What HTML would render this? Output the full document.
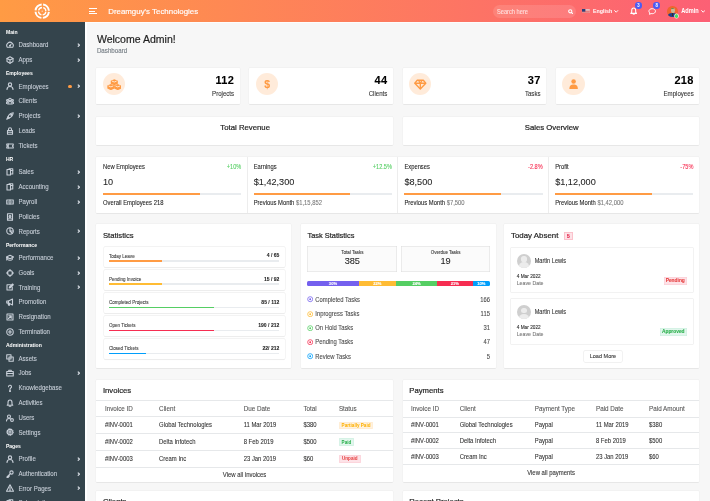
<!DOCTYPE html><html><head><meta charset="utf-8"><style>
html,body{margin:0;padding:0;width:710px;height:501px;overflow:hidden;background:#f7f7f7;font-family:"Liberation Sans", sans-serif;}
#r{position:relative;width:710px;height:501px;overflow:hidden;will-change:transform;} #r div{-webkit-text-stroke:0.08px currentColor;}
</style></head><body><div id="r">
<div style="position:absolute;left:0.00px;top:0.00px;width:710.00px;height:22.20px;background:linear-gradient(to right,#ff9b44 0%,#fc6075 100%);"></div>
<div style="position:absolute;left:87.00px;top:22.20px;width:623.00px;height:1.00px;background:#fdfdfd;"></div>
<svg style="position:absolute;left:34.20px;top:2.90px;" width="16.40" height="16.40" viewBox="0 0 40 40"><circle cx="20" cy="20" r="16.4" fill="none" stroke="#fff" stroke-width="4.8" stroke-dasharray="22.16 3.6" stroke-dashoffset="23.96"/><circle cx="20" cy="20" r="9.0" fill="none" stroke="#fff" stroke-width="3.2" stroke-dasharray="11.14 3.0" stroke-dashoffset="12.64"/><circle cx="20" cy="20" r="1.6" fill="#fde0c8"/></svg>
<div style="position:absolute;left:89.00px;top:7.90px;width:8.40px;height:1.00px;background:#fff;"></div>
<div style="position:absolute;left:89.00px;top:10.60px;width:5.50px;height:1.00px;background:#fff;"></div>
<div style="position:absolute;left:89.00px;top:13.20px;width:8.40px;height:1.00px;background:#fff;"></div>
<div style="position:absolute;left:108.20px;top:8.00px;font-size:7.90px;line-height:7.90px;color:#fff;font-weight:400;white-space:nowrap;-webkit-text-stroke:0.15px #fff;">Dreamguy's Technologies</div>
<div style="position:absolute;left:492.70px;top:5.00px;width:83.60px;height:12.70px;background:rgba(255,255,255,0.12);border-radius:7px;"></div>
<div style="position:absolute;left:497.00px;top:10.00px;font-size:5.70px;line-height:5.70px;color:rgba(255,255,255,0.72);font-weight:400;white-space:nowrap;transform:scaleY(1.12);transform-origin:50% 4px;">Search here</div>
<svg style="position:absolute;left:567.60px;top:8.60px;" width="5.60" height="5.60" viewBox="0 0 16 16"><circle cx="6.5" cy="6.5" r="4.6" fill="none" stroke="#fff" stroke-width="3"/><path d="M10 10 L14.5 14.5" stroke="#fff" stroke-width="3.2" stroke-linecap="round"/></svg>
<svg style="position:absolute;left:582.40px;top:8.50px;" width="7.70" height="4.80" viewBox="0 0 16 10"><rect width="16" height="10" fill="#eee"/><rect y="1.5" width="16" height="1.4" fill="#d44"/><rect y="4.3" width="16" height="1.4" fill="#d44"/><rect y="7.1" width="16" height="1.4" fill="#d44"/><rect width="7" height="5.5" fill="#2a3f7a"/></svg>
<div style="position:absolute;left:593.00px;top:9.00px;font-size:5.30px;line-height:5.30px;color:#fff;font-weight:700;white-space:nowrap;transform:scaleY(1.12);transform-origin:50% 4px;-webkit-text-stroke:0;">English</div>
<svg style="position:absolute;left:614.40px;top:9.70px;" width="4.40" height="3.00" viewBox="0 0 10 7"><path d="M1.3 1.3 L5 5.2 L8.7 1.3" fill="none" stroke="#fff" stroke-width="2.2" stroke-linecap="round" stroke-linejoin="round"/></svg>
<svg style="position:absolute;left:629.90px;top:6.60px;" width="7.40" height="8.20" viewBox="0 0 16 18"><path d="M8 2 C4.6 2 3.6 4.8 3.6 8 L3.6 11.8 L1.6 14 L14.4 14 L12.4 11.8 L12.4 8 C12.4 4.8 11.4 2 8 2 Z" fill="none" stroke="#fff" stroke-width="2.3" stroke-linejoin="round"/><path d="M6 16.2 Q8 17.8 10 16.2" fill="none" stroke="#fff" stroke-width="2"/></svg>
<div style="position:absolute;left:635.1px;top:2.4px;width:6.5px;height:6.5px;border-radius:50%;background:#4a5cf5;"></div>
<div style="position:absolute;left:488.35px;width:300px;text-align:center;top:4.00px;font-size:4.30px;line-height:4.30px;color:#fff;font-weight:700;white-space:nowrap;transform:scaleY(1.12);transform-origin:50% 3px;-webkit-text-stroke:0;">3</div>
<svg style="position:absolute;left:647.90px;top:7.90px;" width="8.40" height="7.00" viewBox="0 0 18 16"><path d="M9 1.5 C4.5 1.5 1.5 4.2 1.5 7.3 C1.5 9 2.3 10.3 3.6 11.3 L2.8 14.5 L6.5 12.7 C7.3 12.9 8.1 13 9 13 C13.5 13 16.5 10.4 16.5 7.3 C16.5 4.2 13.5 1.5 9 1.5 Z" fill="none" stroke="#fff" stroke-width="2.2" stroke-linejoin="round"/></svg>
<div style="position:absolute;left:653.4px;top:2.1px;width:6.5px;height:6.5px;border-radius:50%;background:#4a5cf5;"></div>
<div style="position:absolute;left:506.65px;width:300px;text-align:center;top:4.00px;font-size:4.30px;line-height:4.30px;color:#fff;font-weight:700;white-space:nowrap;transform:scaleY(1.12);transform-origin:50% 3px;-webkit-text-stroke:0;">8</div>
<div style="position:absolute;left:667.4px;top:6.3px;width:10.4px;height:10.4px;border-radius:50%;overflow:hidden;background:#f0642e;"><div style="position:absolute;left:3.2px;top:2.2px;width:4px;height:5px;border-radius:45%;background:#c9b59a;"></div><div style="position:absolute;left:3.6px;top:1.4px;width:3.2px;height:1.6px;border-radius:40%;background:#6f8a4a;"></div><div style="position:absolute;left:0.6px;top:6.8px;width:9.2px;height:6px;border-radius:45% 45% 0 0;background:#1d3f8a;"></div><div style="position:absolute;left:4.3px;top:6.6px;width:1.8px;height:3.5px;background:#3a2a2a;"></div></div>
<div style="position:absolute;left:674.6px;top:14.2px;width:3.4px;height:3.4px;border-radius:50%;background:#4cd964;box-shadow:0 0 0 0.6px #fff;"></div>
<div style="position:absolute;left:681.30px;top:9.00px;font-size:5.60px;line-height:5.60px;color:#fff;font-weight:700;white-space:nowrap;transform:scaleY(1.12);transform-origin:50% 4px;-webkit-text-stroke:0;">Admin</div>
<svg style="position:absolute;left:700.80px;top:9.70px;" width="4.40" height="3.00" viewBox="0 0 10 7"><path d="M1.3 1.3 L5 5.2 L8.7 1.3" fill="none" stroke="#fff" stroke-width="2.2" stroke-linecap="round" stroke-linejoin="round"/></svg>
<div style="position:absolute;left:0.00px;top:22.20px;width:85.30px;height:478.80px;background:#34444c;"></div>
<div style="position:absolute;left:85.30px;top:22.20px;width:1.70px;height:478.80px;background:#ffffff;"></div>
<div style="position:absolute;left:5.90px;top:30.00px;font-size:5.10px;line-height:5.10px;color:#ffffff;font-weight:700;white-space:nowrap;transform:scaleY(1.12);transform-origin:50% 4px;-webkit-text-stroke:0;">Main</div>
<div style="position:absolute;left:18.50px;top:42.00px;font-size:6.10px;line-height:6.10px;color:#c8cfd8;font-weight:400;white-space:nowrap;transform:scaleY(1.12);transform-origin:50% 5px;">Dashboard</div>
<svg style="position:absolute;left:6.00px;top:41.15px" width="8.0" height="8.0" viewBox="0 0 16 16"><g fill="none" stroke="#c8cfd8" stroke-width="2.2" stroke-linejoin="round" stroke-linecap="round"><path d="M2.5 12.5 A6.5 6.5 0 1 1 13.5 12.5 Z" /><path d="M8 9 L10.5 6" /><circle cx="8" cy="9.5" r="1" /></g></svg>
<svg style="position:absolute;left:76.90px;top:43.05px;" width="3.20" height="4.30" viewBox="0 0 6 8"><path d="M1.5 1.2 L4.6 4 L1.5 6.8" fill="none" stroke="#d5dbe2" stroke-width="2.3"/></svg>
<div style="position:absolute;left:18.50px;top:57.00px;font-size:6.10px;line-height:6.10px;color:#c8cfd8;font-weight:400;white-space:nowrap;transform:scaleY(1.12);transform-origin:50% 5px;">Apps</div>
<svg style="position:absolute;left:6.00px;top:55.95px" width="8.0" height="8.0" viewBox="0 0 16 16"><g fill="none" stroke="#c8cfd8" stroke-width="2.2" stroke-linejoin="round" stroke-linecap="round"><path d="M8 1.5 L14 4.8 L14 11.2 L8 14.5 L2 11.2 L2 4.8 Z"/><path d="M2 4.8 L8 8 L14 4.8 M8 8 L8 14.5"/></g></svg>
<svg style="position:absolute;left:76.90px;top:57.85px;" width="3.20" height="4.30" viewBox="0 0 6 8"><path d="M1.5 1.2 L4.6 4 L1.5 6.8" fill="none" stroke="#d5dbe2" stroke-width="2.3"/></svg>
<div style="position:absolute;left:5.90px;top:71.00px;font-size:5.10px;line-height:5.10px;color:#ffffff;font-weight:700;white-space:nowrap;transform:scaleY(1.12);transform-origin:50% 4px;-webkit-text-stroke:0;">Employees</div>
<div style="position:absolute;left:18.50px;top:84.00px;font-size:6.10px;line-height:6.10px;color:#c8cfd8;font-weight:400;white-space:nowrap;transform:scaleY(1.12);transform-origin:50% 5px;">Employees</div>
<svg style="position:absolute;left:6.00px;top:82.45px" width="8.0" height="8.0" viewBox="0 0 16 16"><g fill="none" stroke="#c8cfd8" stroke-width="2.2" stroke-linejoin="round" stroke-linecap="round"><circle cx="8" cy="5" r="3.3"/><path d="M2 15 C2 10.5 4.5 9 8 9 C11.5 9 14 10.5 14 15"/></g></svg>
<svg style="position:absolute;left:76.90px;top:84.35px;" width="3.20" height="4.30" viewBox="0 0 6 8"><path d="M1.5 1.2 L4.6 4 L1.5 6.8" fill="none" stroke="#d5dbe2" stroke-width="2.3"/></svg>
<div style="position:absolute;left:68.30px;top:84.65px;width:3.4px;height:3.4px;border-radius:50%;background:#ff9b44"></div>
<div style="position:absolute;left:18.50px;top:98.00px;font-size:6.10px;line-height:6.10px;color:#c8cfd8;font-weight:400;white-space:nowrap;transform:scaleY(1.12);transform-origin:50% 5px;">Clients</div>
<svg style="position:absolute;left:6.00px;top:97.25px" width="8.0" height="8.0" viewBox="0 0 16 16"><g fill="none" stroke="#c8cfd8" stroke-width="2.2" stroke-linejoin="round" stroke-linecap="round"><circle cx="8" cy="5" r="2.6"/><path d="M3.5 14 C3.5 10.5 5.5 9 8 9 C10.5 9 12.5 10.5 12.5 14 Z"/><circle cx="3" cy="7" r="1.8"/><circle cx="13" cy="7" r="1.8"/><path d="M0.8 13 C0.8 11 1.5 10 3 10 M15.2 13 C15.2 11 14.5 10 13 10"/></g></svg>
<div style="position:absolute;left:18.50px;top:113.00px;font-size:6.10px;line-height:6.10px;color:#c8cfd8;font-weight:400;white-space:nowrap;transform:scaleY(1.12);transform-origin:50% 5px;">Projects</div>
<svg style="position:absolute;left:6.00px;top:112.05px" width="8.0" height="8.0" viewBox="0 0 16 16"><g fill="none" stroke="#c8cfd8" stroke-width="2.2" stroke-linejoin="round" stroke-linecap="round"><path d="M14.5 1.5 C10 2 6 5 4 9.5 L6.5 12 C11 10 14 6 14.5 1.5 Z"/><path d="M4 9.5 L1.5 14.5 L6.5 12"/><circle cx="10.5" cy="5.5" r="1.2"/></g></svg>
<svg style="position:absolute;left:76.90px;top:113.95px;" width="3.20" height="4.30" viewBox="0 0 6 8"><path d="M1.5 1.2 L4.6 4 L1.5 6.8" fill="none" stroke="#d5dbe2" stroke-width="2.3"/></svg>
<div style="position:absolute;left:18.50px;top:128.00px;font-size:6.10px;line-height:6.10px;color:#c8cfd8;font-weight:400;white-space:nowrap;transform:scaleY(1.12);transform-origin:50% 5px;">Leads</div>
<svg style="position:absolute;left:6.00px;top:126.85px" width="8.0" height="8.0" viewBox="0 0 16 16"><g fill="none" stroke="#c8cfd8" stroke-width="2.2" stroke-linejoin="round" stroke-linecap="round"><path d="M3 7 L13 7 L13 14.5 L3 14.5 Z"/><path d="M5 7 L5 4.5 A3 3 0 0 1 11 4.5 L11 7"/><path d="M3 10.5 L13 10.5"/></g></svg>
<div style="position:absolute;left:18.50px;top:143.00px;font-size:6.10px;line-height:6.10px;color:#c8cfd8;font-weight:400;white-space:nowrap;transform:scaleY(1.12);transform-origin:50% 5px;">Tickets</div>
<svg style="position:absolute;left:6.00px;top:141.65px" width="8.0" height="8.0" viewBox="0 0 16 16"><g fill="none" stroke="#c8cfd8" stroke-width="2.2" stroke-linejoin="round" stroke-linecap="round"><path d="M1.5 4 L14.5 4 L14.5 6.5 A1.5 1.5 0 0 0 14.5 9.5 L14.5 12 L1.5 12 L1.5 9.5 A1.5 1.5 0 0 0 1.5 6.5 Z"/><path d="M4.5 4 L4.5 12"/></g></svg>
<div style="position:absolute;left:5.90px;top:157.00px;font-size:5.10px;line-height:5.10px;color:#ffffff;font-weight:700;white-space:nowrap;transform:scaleY(1.12);transform-origin:50% 4px;-webkit-text-stroke:0;">HR</div>
<div style="position:absolute;left:18.50px;top:169.00px;font-size:6.10px;line-height:6.10px;color:#c8cfd8;font-weight:400;white-space:nowrap;transform:scaleY(1.12);transform-origin:50% 5px;">Sales</div>
<svg style="position:absolute;left:6.00px;top:168.15px" width="8.0" height="8.0" viewBox="0 0 16 16"><g fill="none" stroke="#c8cfd8" stroke-width="2.2" stroke-linejoin="round" stroke-linecap="round"><path d="M2 3 L9 3 L9 14 L2 14 Z"/><path d="M6 1.5 L13.5 1.5 L13.5 12 L9 12"/><path d="M9 5 L13.5 5"/></g></svg>
<svg style="position:absolute;left:76.90px;top:170.05px;" width="3.20" height="4.30" viewBox="0 0 6 8"><path d="M1.5 1.2 L4.6 4 L1.5 6.8" fill="none" stroke="#d5dbe2" stroke-width="2.3"/></svg>
<div style="position:absolute;left:18.50px;top:184.00px;font-size:6.10px;line-height:6.10px;color:#c8cfd8;font-weight:400;white-space:nowrap;transform:scaleY(1.12);transform-origin:50% 5px;">Accounting</div>
<svg style="position:absolute;left:6.00px;top:182.95px" width="8.0" height="8.0" viewBox="0 0 16 16"><g fill="none" stroke="#c8cfd8" stroke-width="2.2" stroke-linejoin="round" stroke-linecap="round"><path d="M2 3 L9 3 L9 14 L2 14 Z"/><path d="M6 1.5 L13.5 1.5 L13.5 12 L9 12"/><path d="M9 5 L13.5 5"/></g></svg>
<svg style="position:absolute;left:76.90px;top:184.85px;" width="3.20" height="4.30" viewBox="0 0 6 8"><path d="M1.5 1.2 L4.6 4 L1.5 6.8" fill="none" stroke="#d5dbe2" stroke-width="2.3"/></svg>
<div style="position:absolute;left:18.50px;top:199.00px;font-size:6.10px;line-height:6.10px;color:#c8cfd8;font-weight:400;white-space:nowrap;transform:scaleY(1.12);transform-origin:50% 5px;">Payroll</div>
<svg style="position:absolute;left:6.00px;top:197.75px" width="8.0" height="8.0" viewBox="0 0 16 16"><g fill="none" stroke="#c8cfd8" stroke-width="2.2" stroke-linejoin="round" stroke-linecap="round"><path d="M1.5 4 L14.5 4 L14.5 12 L1.5 12 Z"/><path d="M8 4 L8 12"/><path d="M4 8 L6 8 M10 8 L12 8"/></g></svg>
<svg style="position:absolute;left:76.90px;top:199.65px;" width="3.20" height="4.30" viewBox="0 0 6 8"><path d="M1.5 1.2 L4.6 4 L1.5 6.8" fill="none" stroke="#d5dbe2" stroke-width="2.3"/></svg>
<div style="position:absolute;left:18.50px;top:214.00px;font-size:6.10px;line-height:6.10px;color:#c8cfd8;font-weight:400;white-space:nowrap;transform:scaleY(1.12);transform-origin:50% 5px;">Policies</div>
<svg style="position:absolute;left:6.00px;top:212.55px" width="8.0" height="8.0" viewBox="0 0 16 16"><g fill="none" stroke="#c8cfd8" stroke-width="2.2" stroke-linejoin="round" stroke-linecap="round"><path d="M3 1.5 L13 1.5 L13 14.5 L3 14.5 Z"/><circle cx="8" cy="7" r="1.8"/><path d="M5.5 12 C5.5 10 6.5 9.5 8 9.5 C9.5 9.5 10.5 10 10.5 12"/></g></svg>
<div style="position:absolute;left:18.50px;top:229.00px;font-size:6.10px;line-height:6.10px;color:#c8cfd8;font-weight:400;white-space:nowrap;transform:scaleY(1.12);transform-origin:50% 5px;">Reports</div>
<svg style="position:absolute;left:6.00px;top:227.35px" width="8.0" height="8.0" viewBox="0 0 16 16"><g fill="none" stroke="#c8cfd8" stroke-width="2.2" stroke-linejoin="round" stroke-linecap="round"><circle cx="8" cy="8" r="6.5"/><path d="M8 1.5 L8 8 L14.5 8"/><path d="M8 8 L12.5 12.5"/></g></svg>
<svg style="position:absolute;left:76.90px;top:229.25px;" width="3.20" height="4.30" viewBox="0 0 6 8"><path d="M1.5 1.2 L4.6 4 L1.5 6.8" fill="none" stroke="#d5dbe2" stroke-width="2.3"/></svg>
<div style="position:absolute;left:5.90px;top:243.00px;font-size:5.10px;line-height:5.10px;color:#ffffff;font-weight:700;white-space:nowrap;transform:scaleY(1.12);transform-origin:50% 4px;-webkit-text-stroke:0;">Performance</div>
<div style="position:absolute;left:18.50px;top:255.00px;font-size:6.10px;line-height:6.10px;color:#c8cfd8;font-weight:400;white-space:nowrap;transform:scaleY(1.12);transform-origin:50% 5px;">Performance</div>
<svg style="position:absolute;left:6.00px;top:253.85px" width="8.0" height="8.0" viewBox="0 0 16 16"><g fill="none" stroke="#c8cfd8" stroke-width="2.2" stroke-linejoin="round" stroke-linecap="round"><path d="M0.8 6 L8 2.5 L15.2 6 L8 9.5 Z"/><path d="M3.5 7.5 L3.5 11 C5 13 11 13 12.5 11 L12.5 7.5"/><path d="M1.5 6.5 L1.5 12"/></g></svg>
<svg style="position:absolute;left:76.90px;top:255.75px;" width="3.20" height="4.30" viewBox="0 0 6 8"><path d="M1.5 1.2 L4.6 4 L1.5 6.8" fill="none" stroke="#d5dbe2" stroke-width="2.3"/></svg>
<div style="position:absolute;left:18.50px;top:270.00px;font-size:6.10px;line-height:6.10px;color:#c8cfd8;font-weight:400;white-space:nowrap;transform:scaleY(1.12);transform-origin:50% 5px;">Goals</div>
<svg style="position:absolute;left:6.00px;top:268.65px" width="8.0" height="8.0" viewBox="0 0 16 16"><g fill="none" stroke="#c8cfd8" stroke-width="2.2" stroke-linejoin="round" stroke-linecap="round"><circle cx="8" cy="8" r="5"/><path d="M8 0.8 L8 4 M8 12 L8 15.2 M0.8 8 L4 8 M12 8 L15.2 8"/></g></svg>
<svg style="position:absolute;left:76.90px;top:270.55px;" width="3.20" height="4.30" viewBox="0 0 6 8"><path d="M1.5 1.2 L4.6 4 L1.5 6.8" fill="none" stroke="#d5dbe2" stroke-width="2.3"/></svg>
<div style="position:absolute;left:18.50px;top:285.00px;font-size:6.10px;line-height:6.10px;color:#c8cfd8;font-weight:400;white-space:nowrap;transform:scaleY(1.12);transform-origin:50% 5px;">Training</div>
<svg style="position:absolute;left:6.00px;top:283.45px" width="8.0" height="8.0" viewBox="0 0 16 16"><g fill="none" stroke="#c8cfd8" stroke-width="2.2" stroke-linejoin="round" stroke-linecap="round"><path d="M2 3.5 L9 3.5 M2 3.5 L2 14 L12.5 14 L12.5 8"/><path d="M6.5 10 L7 8 L13 2 L14.5 3.5 L8.5 9.5 Z"/></g></svg>
<svg style="position:absolute;left:76.90px;top:285.35px;" width="3.20" height="4.30" viewBox="0 0 6 8"><path d="M1.5 1.2 L4.6 4 L1.5 6.8" fill="none" stroke="#d5dbe2" stroke-width="2.3"/></svg>
<div style="position:absolute;left:18.50px;top:299.00px;font-size:6.10px;line-height:6.10px;color:#c8cfd8;font-weight:400;white-space:nowrap;transform:scaleY(1.12);transform-origin:50% 5px;">Promotion</div>
<svg style="position:absolute;left:6.00px;top:298.25px" width="8.0" height="8.0" viewBox="0 0 16 16"><g fill="none" stroke="#c8cfd8" stroke-width="2.2" stroke-linejoin="round" stroke-linecap="round"><path d="M1.5 6 L5 6 L13 2 L13 14 L5 10 L1.5 10 Z"/><path d="M4 10 L5 14.5 L7 14.5 L6.5 10.5"/><path d="M5 6 L5 10"/></g></svg>
<div style="position:absolute;left:18.50px;top:314.00px;font-size:6.10px;line-height:6.10px;color:#c8cfd8;font-weight:400;white-space:nowrap;transform:scaleY(1.12);transform-origin:50% 5px;">Resignation</div>
<svg style="position:absolute;left:6.00px;top:313.05px" width="8.0" height="8.0" viewBox="0 0 16 16"><g fill="none" stroke="#c8cfd8" stroke-width="2.2" stroke-linejoin="round" stroke-linecap="round"><path d="M2 2 L14 2 L14 14 L2 14 Z"/><path d="M5.5 5.5 L10.5 5.5 L10.5 10.5 M10.5 5.5 L5 11"/></g></svg>
<div style="position:absolute;left:18.50px;top:329.00px;font-size:6.10px;line-height:6.10px;color:#c8cfd8;font-weight:400;white-space:nowrap;transform:scaleY(1.12);transform-origin:50% 5px;">Termination</div>
<svg style="position:absolute;left:6.00px;top:327.85px" width="8.0" height="8.0" viewBox="0 0 16 16"><g fill="none" stroke="#c8cfd8" stroke-width="2.2" stroke-linejoin="round" stroke-linecap="round"><circle cx="8" cy="8" r="6.5"/><circle cx="8" cy="8" r="2.2"/></g></svg>
<div style="position:absolute;left:5.90px;top:343.00px;font-size:5.10px;line-height:5.10px;color:#ffffff;font-weight:700;white-space:nowrap;transform:scaleY(1.12);transform-origin:50% 4px;-webkit-text-stroke:0;">Administration</div>
<div style="position:absolute;left:18.50px;top:356.00px;font-size:6.10px;line-height:6.10px;color:#c8cfd8;font-weight:400;white-space:nowrap;transform:scaleY(1.12);transform-origin:50% 5px;">Assets</div>
<svg style="position:absolute;left:6.00px;top:354.35px" width="8.0" height="8.0" viewBox="0 0 16 16"><g fill="none" stroke="#c8cfd8" stroke-width="2.2" stroke-linejoin="round" stroke-linecap="round"><path d="M1.5 1.5 L10 1.5 L10 10 L1.5 10 Z"/><path d="M6 6 L14.5 6 L14.5 14.5 L6 14.5 Z"/></g></svg>
<div style="position:absolute;left:18.50px;top:370.00px;font-size:6.10px;line-height:6.10px;color:#c8cfd8;font-weight:400;white-space:nowrap;transform:scaleY(1.12);transform-origin:50% 5px;">Jobs</div>
<svg style="position:absolute;left:6.00px;top:369.15px" width="8.0" height="8.0" viewBox="0 0 16 16"><g fill="none" stroke="#c8cfd8" stroke-width="2.2" stroke-linejoin="round" stroke-linecap="round"><path d="M1.5 5 L14.5 5 L14.5 14 L1.5 14 Z"/><path d="M5.5 5 L5.5 2.5 L10.5 2.5 L10.5 5"/><path d="M1.5 9 L14.5 9"/></g></svg>
<svg style="position:absolute;left:76.90px;top:371.05px;" width="3.20" height="4.30" viewBox="0 0 6 8"><path d="M1.5 1.2 L4.6 4 L1.5 6.8" fill="none" stroke="#d5dbe2" stroke-width="2.3"/></svg>
<div style="position:absolute;left:18.50px;top:385.00px;font-size:6.10px;line-height:6.10px;color:#c8cfd8;font-weight:400;white-space:nowrap;transform:scaleY(1.12);transform-origin:50% 5px;">Knowledgebase</div>
<svg style="position:absolute;left:6.00px;top:383.95px" width="8.0" height="8.0" viewBox="0 0 16 16"><g fill="none" stroke="#c8cfd8" stroke-width="2.2" stroke-linejoin="round" stroke-linecap="round"><path d="M5 5.5 A3 3 0 1 1 9.5 8 C8.3 8.8 8 9.5 8 11"/><circle cx="8" cy="14" r="1"/></g></svg>
<div style="position:absolute;left:18.50px;top:400.00px;font-size:6.10px;line-height:6.10px;color:#c8cfd8;font-weight:400;white-space:nowrap;transform:scaleY(1.12);transform-origin:50% 5px;">Activities</div>
<svg style="position:absolute;left:6.00px;top:398.75px" width="8.0" height="8.0" viewBox="0 0 16 16"><g fill="none" stroke="#c8cfd8" stroke-width="2.2" stroke-linejoin="round" stroke-linecap="round"><path d="M8 2 C4.8 2 4 4.5 4 7.5 L4 11 L2.5 12.5 L13.5 12.5 L12 11 L12 7.5 C12 4.5 11.2 2 8 2 Z"/><path d="M6.5 14.5 L9.5 14.5"/></g></svg>
<div style="position:absolute;left:18.50px;top:415.00px;font-size:6.10px;line-height:6.10px;color:#c8cfd8;font-weight:400;white-space:nowrap;transform:scaleY(1.12);transform-origin:50% 5px;">Users</div>
<svg style="position:absolute;left:6.00px;top:413.55px" width="8.0" height="8.0" viewBox="0 0 16 16"><g fill="none" stroke="#c8cfd8" stroke-width="2.2" stroke-linejoin="round" stroke-linecap="round"><circle cx="6" cy="5" r="3"/><path d="M1 14 C1 10 3 9 6 9 C7.5 9 8.5 9.3 9.3 10"/><circle cx="12" cy="12" r="2.8"/></g></svg>
<div style="position:absolute;left:18.50px;top:430.00px;font-size:6.10px;line-height:6.10px;color:#c8cfd8;font-weight:400;white-space:nowrap;transform:scaleY(1.12);transform-origin:50% 5px;">Settings</div>
<svg style="position:absolute;left:6.00px;top:428.35px" width="8.0" height="8.0" viewBox="0 0 16 16"><g fill="none" stroke="#c8cfd8" stroke-width="2.2" stroke-linejoin="round" stroke-linecap="round"><circle cx="8" cy="8" r="2.2"/><path d="M8 1.5 L9.3 3.3 L11.5 2.6 L11.8 4.9 L14 5.6 L13 7.6 L14.5 9.3 L12.4 10.3 L12.6 12.6 L10.3 12.4 L9.3 14.5 L7.6 13 L5.6 14 L4.9 11.8 L2.6 11.5 L3.3 9.3 L1.5 8 L3.3 6.7 L2.6 4.5 L4.9 4.2 L5.6 2 L7.6 3 Z"/></g></svg>
<div style="position:absolute;left:5.90px;top:444.00px;font-size:5.10px;line-height:5.10px;color:#ffffff;font-weight:700;white-space:nowrap;transform:scaleY(1.12);transform-origin:50% 4px;-webkit-text-stroke:0;">Pages</div>
<div style="position:absolute;left:18.50px;top:456.00px;font-size:6.10px;line-height:6.10px;color:#c8cfd8;font-weight:400;white-space:nowrap;transform:scaleY(1.12);transform-origin:50% 5px;">Profile</div>
<svg style="position:absolute;left:6.00px;top:454.85px" width="8.0" height="8.0" viewBox="0 0 16 16"><g fill="none" stroke="#c8cfd8" stroke-width="2.2" stroke-linejoin="round" stroke-linecap="round"><circle cx="8" cy="5" r="3.3"/><path d="M2 15 C2 10.5 4.5 9 8 9 C11.5 9 14 10.5 14 15"/></g></svg>
<svg style="position:absolute;left:76.90px;top:456.75px;" width="3.20" height="4.30" viewBox="0 0 6 8"><path d="M1.5 1.2 L4.6 4 L1.5 6.8" fill="none" stroke="#d5dbe2" stroke-width="2.3"/></svg>
<div style="position:absolute;left:18.50px;top:471.00px;font-size:6.10px;line-height:6.10px;color:#c8cfd8;font-weight:400;white-space:nowrap;transform:scaleY(1.12);transform-origin:50% 5px;">Authentication</div>
<svg style="position:absolute;left:6.00px;top:469.65px" width="8.0" height="8.0" viewBox="0 0 16 16"><g fill="none" stroke="#c8cfd8" stroke-width="2.2" stroke-linejoin="round" stroke-linecap="round"><circle cx="11" cy="5" r="3.3"/><path d="M8.6 7.4 L2 14 L2 15 L4.5 15 L4.5 13 L6 13 L6 11.5 L7 11.5"/></g></svg>
<svg style="position:absolute;left:76.90px;top:471.55px;" width="3.20" height="4.30" viewBox="0 0 6 8"><path d="M1.5 1.2 L4.6 4 L1.5 6.8" fill="none" stroke="#d5dbe2" stroke-width="2.3"/></svg>
<div style="position:absolute;left:18.50px;top:486.00px;font-size:6.10px;line-height:6.10px;color:#c8cfd8;font-weight:400;white-space:nowrap;transform:scaleY(1.12);transform-origin:50% 5px;">Error Pages</div>
<svg style="position:absolute;left:6.00px;top:484.45px" width="8.0" height="8.0" viewBox="0 0 16 16"><g fill="none" stroke="#c8cfd8" stroke-width="2.2" stroke-linejoin="round" stroke-linecap="round"><path d="M8 1.5 L15 14.5 L1 14.5 Z"/><path d="M8 6 L8 10.5"/><circle cx="8" cy="12.5" r="0.6"/></g></svg>
<svg style="position:absolute;left:76.90px;top:486.35px;" width="3.20" height="4.30" viewBox="0 0 6 8"><path d="M1.5 1.2 L4.6 4 L1.5 6.8" fill="none" stroke="#d5dbe2" stroke-width="2.3"/></svg>
<div style="position:absolute;left:18.50px;top:500.00px;font-size:6.10px;line-height:6.10px;color:#c8cfd8;font-weight:400;white-space:nowrap;transform:scaleY(1.12);transform-origin:50% 5px;">Subscriptions</div>
<svg style="position:absolute;left:6.00px;top:499.25px" width="8.0" height="8.0" viewBox="0 0 16 16"><g fill="none" stroke="#c8cfd8" stroke-width="2.2" stroke-linejoin="round" stroke-linecap="round"><path d="M2 3 L9 3 L9 14 L2 14 Z"/><path d="M6 1.5 L13.5 1.5 L13.5 12 L9 12"/><path d="M9 5 L13.5 5"/></g></svg>
<svg style="position:absolute;left:76.90px;top:501.15px;" width="3.20" height="4.30" viewBox="0 0 6 8"><path d="M1.5 1.2 L4.6 4 L1.5 6.8" fill="none" stroke="#d5dbe2" stroke-width="2.3"/></svg>
<div style="position:absolute;left:96.90px;top:34.00px;font-size:10.54px;line-height:10.54px;color:#1f1f1f;font-weight:400;white-space:nowrap;-webkit-text-stroke:0.2px currentColor;">Welcome Admin!</div>
<div style="position:absolute;left:96.90px;top:48.00px;font-size:6.19px;line-height:6.19px;color:#6c757d;font-weight:400;white-space:nowrap;transform:scaleY(1.12);transform-origin:50% 5px;">Dashboard</div>
<div style="position:absolute;left:96.10px;top:67.60px;width:143.60px;height:36.70px;background:#fff;border-radius:0.8px;box-shadow:0 0 0 0.4px #ededed,0 0.4px 0.6px rgba(0,0,0,0.18);"></div>
<div style="position:absolute;left:102.80px;top:73.10px;width:22.2px;height:22.2px;border-radius:50%;background:rgba(255,155,68,0.2)"></div>
<svg style="position:absolute;left:106.60px;top:78.60px;" width="14.60" height="11.20" viewBox="0 0 22 17"><g fill="#ff9b44"><path d="M11 0.2 L16.4 2.6 L16.4 7.2 L11 9.6 L5.6 7.2 L5.6 2.6 Z"/><path d="M5.8 7.6 L11.2 10 L11.2 14.6 L5.8 17 L0.4 14.6 L0.4 10 Z"/><path d="M16.2 7.6 L21.6 10 L21.6 14.6 L16.2 17 L10.8 14.6 L10.8 10 Z"/></g><g fill="none" stroke="#fff2e6" stroke-width="1.3"><path d="M7.5 3.2 L11 4.6 L14.5 3.2"/><path d="M2.3 10.6 L5.8 12 L9.3 10.6"/><path d="M12.7 10.6 L16.2 12 L19.7 10.6"/></g></svg>
<div style="position:absolute;right:475.80px;top:75.00px;font-size:11.00px;line-height:11.00px;color:#000;font-weight:700;white-space:nowrap;letter-spacing:0.35px;">112</div>
<div style="position:absolute;right:475.90px;top:91.00px;font-size:6.10px;line-height:6.10px;color:#333;font-weight:400;white-space:nowrap;transform:scaleY(1.12);transform-origin:50% 5px;">Projects</div>
<div style="position:absolute;left:249.30px;top:67.60px;width:143.60px;height:36.70px;background:#fff;border-radius:0.8px;box-shadow:0 0 0 0.4px #ededed,0 0.4px 0.6px rgba(0,0,0,0.18);"></div>
<div style="position:absolute;left:256.00px;top:73.10px;width:22.2px;height:22.2px;border-radius:50%;background:rgba(255,155,68,0.2)"></div>
<div style="position:absolute;left:117.10px;width:300px;text-align:center;top:79.00px;font-size:10.50px;line-height:10.50px;color:#ff9b44;font-weight:700;white-space:nowrap;">$</div>
<div style="position:absolute;right:322.60px;top:75.00px;font-size:11.00px;line-height:11.00px;color:#000;font-weight:700;white-space:nowrap;letter-spacing:0.35px;">44</div>
<div style="position:absolute;right:322.70px;top:91.00px;font-size:6.10px;line-height:6.10px;color:#333;font-weight:400;white-space:nowrap;transform:scaleY(1.12);transform-origin:50% 5px;">Clients</div>
<div style="position:absolute;left:402.50px;top:67.60px;width:143.60px;height:36.70px;background:#fff;border-radius:0.8px;box-shadow:0 0 0 0.4px #ededed,0 0.4px 0.6px rgba(0,0,0,0.18);"></div>
<div style="position:absolute;left:409.20px;top:73.10px;width:22.2px;height:22.2px;border-radius:50%;background:rgba(255,155,68,0.2)"></div>
<svg style="position:absolute;left:414.00px;top:78.70px;" width="12.60" height="11.00" viewBox="0 0 20 18"><g fill="none" stroke="#ff9b44" stroke-width="2.2" stroke-linejoin="round"><path d="M5 2 L15 2 L19 7 L10 16.5 L1 7 Z"/><path d="M1 7 L19 7 M7 2 L10 7 L13 2 M10 7 L10 16"/></g></svg>
<div style="position:absolute;right:169.40px;top:75.00px;font-size:11.00px;line-height:11.00px;color:#000;font-weight:700;white-space:nowrap;letter-spacing:0.35px;">37</div>
<div style="position:absolute;right:169.50px;top:91.00px;font-size:6.10px;line-height:6.10px;color:#333;font-weight:400;white-space:nowrap;transform:scaleY(1.12);transform-origin:50% 5px;">Tasks</div>
<div style="position:absolute;left:555.70px;top:67.60px;width:143.60px;height:36.70px;background:#fff;border-radius:0.8px;box-shadow:0 0 0 0.4px #ededed,0 0.4px 0.6px rgba(0,0,0,0.18);"></div>
<div style="position:absolute;left:562.40px;top:73.10px;width:22.2px;height:22.2px;border-radius:50%;background:rgba(255,155,68,0.2)"></div>
<svg style="position:absolute;left:568.90px;top:79.00px;" width="9.20" height="10.40" viewBox="0 0 14 16"><g fill="#ff9b44"><circle cx="7" cy="4" r="3.5"/><path d="M0.5 15.5 C0.5 10 3 8.5 7 8.5 C11 8.5 13.5 10 13.5 15.5 Z"/></g></svg>
<div style="position:absolute;right:16.20px;top:75.00px;font-size:11.00px;line-height:11.00px;color:#000;font-weight:700;white-space:nowrap;letter-spacing:0.35px;">218</div>
<div style="position:absolute;right:16.30px;top:91.00px;font-size:6.10px;line-height:6.10px;color:#333;font-weight:400;white-space:nowrap;transform:scaleY(1.12);transform-origin:50% 5px;">Employees</div>
<div style="position:absolute;left:96.10px;top:116.90px;width:296.45px;height:27.70px;background:#fff;border-radius:0.8px;box-shadow:0 0 0 0.4px #ededed,0 0.4px 0.6px rgba(0,0,0,0.18);"></div>
<div style="position:absolute;left:402.55px;top:116.90px;width:296.45px;height:27.70px;background:#fff;border-radius:0.8px;box-shadow:0 0 0 0.4px #ededed,0 0.4px 0.6px rgba(0,0,0,0.18);"></div>
<div style="position:absolute;left:95.20px;width:300px;text-align:center;top:124.00px;font-size:7.77px;line-height:7.77px;color:#1f1f1f;font-weight:400;white-space:nowrap;-webkit-text-stroke:0.2px currentColor;">Total Revenue</div>
<div style="position:absolute;left:401.70px;width:300px;text-align:center;top:124.00px;font-size:7.77px;line-height:7.77px;color:#1f1f1f;font-weight:400;white-space:nowrap;-webkit-text-stroke:0.2px currentColor;">Sales Overview</div>
<div style="position:absolute;left:96.10px;top:156.80px;width:602.90px;height:56.00px;background:#fff;border-radius:0.8px;box-shadow:0 0 0 0.4px #ededed,0 0.4px 0.6px rgba(0,0,0,0.18);"></div>
<div style="position:absolute;left:103.00px;top:165.00px;font-size:5.80px;line-height:5.80px;color:#1f1f1f;font-weight:400;white-space:nowrap;transform:scaleY(1.12);transform-origin:50% 4px;">New Employees</div>
<div style="position:absolute;right:468.77px;top:165.00px;font-size:5.60px;line-height:5.60px;color:#55ce63;font-weight:400;white-space:nowrap;transform:scaleY(1.12);transform-origin:50% 4px;">+10%</div>
<div style="position:absolute;left:103.00px;top:178.00px;font-size:9.15px;line-height:9.15px;color:#1f1f1f;font-weight:400;white-space:nowrap;">10</div>
<div style="position:absolute;left:103.00px;top:192.90px;width:138.22px;height:2.00px;background:#e9ecef;"></div>
<div style="position:absolute;left:103.00px;top:192.90px;width:96.76px;height:2.00px;background:#ff9b44;"></div>
<div style="position:absolute;left:103.00px;top:201.00px;font-size:5.85px;line-height:5.85px;color:#1f1f1f;font-weight:400;white-space:nowrap;transform:scaleY(1.12);transform-origin:50% 4px;">Overall Employees 218</div>
<div style="position:absolute;left:246.62px;top:156.80px;width:0.50px;height:56.00px;background:#ededed;"></div>
<div style="position:absolute;left:253.72px;top:165.00px;font-size:5.80px;line-height:5.80px;color:#1f1f1f;font-weight:400;white-space:nowrap;transform:scaleY(1.12);transform-origin:50% 4px;">Earnings</div>
<div style="position:absolute;right:318.05px;top:165.00px;font-size:5.60px;line-height:5.60px;color:#55ce63;font-weight:400;white-space:nowrap;transform:scaleY(1.12);transform-origin:50% 4px;">+12.5%</div>
<div style="position:absolute;left:253.72px;top:178.00px;font-size:9.15px;line-height:9.15px;color:#1f1f1f;font-weight:400;white-space:nowrap;">$1,42,300</div>
<div style="position:absolute;left:253.72px;top:192.90px;width:138.22px;height:2.00px;background:#e9ecef;"></div>
<div style="position:absolute;left:253.72px;top:192.90px;width:96.76px;height:2.00px;background:#ff9b44;"></div>
<div style="position:absolute;left:253.72px;top:201.00px;font-size:5.85px;line-height:5.85px;color:#1f1f1f;font-weight:400;white-space:nowrap;transform:scaleY(1.12);transform-origin:50% 4px;">Previous Month <span style="color:#7a7a7a">$1,15,852</span></div>
<div style="position:absolute;left:397.35px;top:156.80px;width:0.50px;height:56.00px;background:#ededed;"></div>
<div style="position:absolute;left:404.45px;top:165.00px;font-size:5.80px;line-height:5.80px;color:#1f1f1f;font-weight:400;white-space:nowrap;transform:scaleY(1.12);transform-origin:50% 4px;">Expenses</div>
<div style="position:absolute;right:167.33px;top:165.00px;font-size:5.60px;line-height:5.60px;color:#f62d51;font-weight:400;white-space:nowrap;transform:scaleY(1.12);transform-origin:50% 4px;">-2.8%</div>
<div style="position:absolute;left:404.45px;top:178.00px;font-size:9.15px;line-height:9.15px;color:#1f1f1f;font-weight:400;white-space:nowrap;">$8,500</div>
<div style="position:absolute;left:404.45px;top:192.90px;width:138.23px;height:2.00px;background:#e9ecef;"></div>
<div style="position:absolute;left:404.45px;top:192.90px;width:96.76px;height:2.00px;background:#ff9b44;"></div>
<div style="position:absolute;left:404.45px;top:201.00px;font-size:5.85px;line-height:5.85px;color:#1f1f1f;font-weight:400;white-space:nowrap;transform:scaleY(1.12);transform-origin:50% 4px;">Previous Month <span style="color:#7a7a7a">$7,500</span></div>
<div style="position:absolute;left:548.07px;top:156.80px;width:0.50px;height:56.00px;background:#ededed;"></div>
<div style="position:absolute;left:555.17px;top:165.00px;font-size:5.80px;line-height:5.80px;color:#1f1f1f;font-weight:400;white-space:nowrap;transform:scaleY(1.12);transform-origin:50% 4px;">Profit</div>
<div style="position:absolute;right:16.60px;top:165.00px;font-size:5.60px;line-height:5.60px;color:#f62d51;font-weight:400;white-space:nowrap;transform:scaleY(1.12);transform-origin:50% 4px;">-75%</div>
<div style="position:absolute;left:555.17px;top:178.00px;font-size:9.15px;line-height:9.15px;color:#1f1f1f;font-weight:400;white-space:nowrap;">$1,12,000</div>
<div style="position:absolute;left:555.17px;top:192.90px;width:138.23px;height:2.00px;background:#e9ecef;"></div>
<div style="position:absolute;left:555.17px;top:192.90px;width:96.76px;height:2.00px;background:#ff9b44;"></div>
<div style="position:absolute;left:555.17px;top:201.00px;font-size:5.85px;line-height:5.85px;color:#1f1f1f;font-weight:400;white-space:nowrap;transform:scaleY(1.12);transform-origin:50% 4px;">Previous Month <span style="color:#7a7a7a">$1,42,000</span></div>
<div style="position:absolute;left:96.10px;top:224.30px;width:195.00px;height:143.90px;background:#fff;border-radius:0.8px;box-shadow:0 0 0 0.4px #ededed,0 0.4px 0.6px rgba(0,0,0,0.18);"></div>
<div style="position:absolute;left:300.60px;top:224.30px;width:195.00px;height:143.90px;background:#fff;border-radius:0.8px;box-shadow:0 0 0 0.4px #ededed,0 0.4px 0.6px rgba(0,0,0,0.18);"></div>
<div style="position:absolute;left:504.40px;top:224.30px;width:195.00px;height:143.90px;background:#fff;border-radius:0.8px;box-shadow:0 0 0 0.4px #ededed,0 0.4px 0.6px rgba(0,0,0,0.18);"></div>
<div style="position:absolute;left:103.00px;top:232.00px;font-size:7.67px;line-height:7.67px;color:#1f1f1f;font-weight:400;white-space:nowrap;-webkit-text-stroke:0.2px currentColor;">Statistics</div>
<div style="position:absolute;left:103.50px;top:246.50px;width:181.20px;height:20.10px;background:#fff;border-radius:1px;box-shadow:0 0 0 0.45px #e8e8e8,0 0.4px 0.8px rgba(0,0,0,0.06);"></div>
<div style="position:absolute;left:108.90px;top:255.00px;font-size:4.55px;line-height:4.55px;color:#3a3a3a;font-weight:400;white-space:nowrap;transform:scaleY(1.12);transform-origin:50% 3px;">Today Leave</div>
<div style="position:absolute;right:430.70px;top:253.00px;font-size:5.05px;line-height:5.05px;color:#1f1f1f;font-weight:700;white-space:nowrap;transform:scaleY(1.12);transform-origin:50% 4px;">4 / 65</div>
<div style="position:absolute;left:108.90px;top:260.20px;width:169.80px;height:1.60px;background:#e9ecef;"></div>
<div style="position:absolute;left:108.90px;top:260.20px;width:52.64px;height:1.60px;background:#ff9b44;"></div>
<div style="position:absolute;left:103.50px;top:269.65px;width:181.20px;height:20.10px;background:#fff;border-radius:1px;box-shadow:0 0 0 0.45px #e8e8e8,0 0.4px 0.8px rgba(0,0,0,0.06);"></div>
<div style="position:absolute;left:108.90px;top:278.00px;font-size:4.55px;line-height:4.55px;color:#3a3a3a;font-weight:400;white-space:nowrap;transform:scaleY(1.12);transform-origin:50% 3px;">Pending Invoice</div>
<div style="position:absolute;right:430.70px;top:277.00px;font-size:5.05px;line-height:5.05px;color:#1f1f1f;font-weight:700;white-space:nowrap;transform:scaleY(1.12);transform-origin:50% 4px;">15 / 92</div>
<div style="position:absolute;left:108.90px;top:283.35px;width:169.80px;height:1.60px;background:#e9ecef;"></div>
<div style="position:absolute;left:108.90px;top:283.35px;width:52.64px;height:1.60px;background:#ffbc34;"></div>
<div style="position:absolute;left:103.50px;top:292.80px;width:181.20px;height:20.10px;background:#fff;border-radius:1px;box-shadow:0 0 0 0.45px #e8e8e8,0 0.4px 0.8px rgba(0,0,0,0.06);"></div>
<div style="position:absolute;left:108.90px;top:301.00px;font-size:4.55px;line-height:4.55px;color:#3a3a3a;font-weight:400;white-space:nowrap;transform:scaleY(1.12);transform-origin:50% 3px;">Completed Projects</div>
<div style="position:absolute;right:430.70px;top:300.00px;font-size:5.05px;line-height:5.05px;color:#1f1f1f;font-weight:700;white-space:nowrap;transform:scaleY(1.12);transform-origin:50% 4px;">85 / 112</div>
<div style="position:absolute;left:108.90px;top:306.50px;width:169.80px;height:1.60px;background:#e9ecef;"></div>
<div style="position:absolute;left:108.90px;top:306.50px;width:105.28px;height:1.60px;background:#55ce63;"></div>
<div style="position:absolute;left:103.50px;top:315.95px;width:181.20px;height:20.10px;background:#fff;border-radius:1px;box-shadow:0 0 0 0.45px #e8e8e8,0 0.4px 0.8px rgba(0,0,0,0.06);"></div>
<div style="position:absolute;left:108.90px;top:324.00px;font-size:4.55px;line-height:4.55px;color:#3a3a3a;font-weight:400;white-space:nowrap;transform:scaleY(1.12);transform-origin:50% 3px;">Open Tickets</div>
<div style="position:absolute;right:430.70px;top:323.00px;font-size:5.05px;line-height:5.05px;color:#1f1f1f;font-weight:700;white-space:nowrap;transform:scaleY(1.12);transform-origin:50% 4px;">190 / 212</div>
<div style="position:absolute;left:108.90px;top:329.65px;width:169.80px;height:1.60px;background:#e9ecef;"></div>
<div style="position:absolute;left:108.90px;top:329.65px;width:105.28px;height:1.60px;background:#f62d51;"></div>
<div style="position:absolute;left:103.50px;top:339.10px;width:181.20px;height:20.10px;background:#fff;border-radius:1px;box-shadow:0 0 0 0.45px #e8e8e8,0 0.4px 0.8px rgba(0,0,0,0.06);"></div>
<div style="position:absolute;left:108.90px;top:347.00px;font-size:4.55px;line-height:4.55px;color:#3a3a3a;font-weight:400;white-space:nowrap;transform:scaleY(1.12);transform-origin:50% 3px;">Closed Tickets</div>
<div style="position:absolute;right:430.70px;top:346.00px;font-size:5.05px;line-height:5.05px;color:#1f1f1f;font-weight:700;white-space:nowrap;transform:scaleY(1.12);transform-origin:50% 4px;">22/ 212</div>
<div style="position:absolute;left:108.90px;top:352.80px;width:169.80px;height:1.60px;background:#e9ecef;"></div>
<div style="position:absolute;left:108.90px;top:352.80px;width:37.36px;height:1.60px;background:#009efb;"></div>
<div style="position:absolute;left:307.50px;top:232.00px;font-size:7.42px;line-height:7.42px;color:#1f1f1f;font-weight:400;white-space:nowrap;-webkit-text-stroke:0.2px currentColor;">Task Statistics</div>
<div style="position:absolute;left:307.40px;top:246.40px;width:89.80px;height:25.30px;background:#fbfbfb;box-shadow:inset 0 0 0 0.5px #dcdcdc;"></div>
<div style="position:absolute;left:202.30px;width:300px;text-align:center;top:251.00px;font-size:4.50px;line-height:4.50px;color:#333;font-weight:400;white-space:nowrap;transform:scaleY(1.12);transform-origin:50% 3px;">Total Tasks</div>
<div style="position:absolute;left:202.30px;width:300px;text-align:center;top:257.00px;font-size:9.20px;line-height:9.20px;color:#1f1f1f;font-weight:400;white-space:nowrap;">385</div>
<div style="position:absolute;left:400.70px;top:246.40px;width:89.80px;height:25.30px;background:#fbfbfb;box-shadow:inset 0 0 0 0.5px #dcdcdc;"></div>
<div style="position:absolute;left:295.60px;width:300px;text-align:center;top:251.00px;font-size:4.50px;line-height:4.50px;color:#333;font-weight:400;white-space:nowrap;transform:scaleY(1.12);transform-origin:50% 3px;">Overdue Tasks</div>
<div style="position:absolute;left:295.60px;width:300px;text-align:center;top:257.00px;font-size:9.20px;line-height:9.20px;color:#1f1f1f;font-weight:400;white-space:nowrap;">19</div>
<div style="position:absolute;left:307.40px;top:280.6px;width:182.50px;height:5.6px;border-radius:1.5px;overflow:hidden;display:flex"><div style="width:51.168px;height:5.6px;background:#7460ee;color:#fff;font-size:4.1px;line-height:5.8px;text-align:center;font-weight:700;-webkit-text-stroke:0.1px #fff">30%</div><div style="width:37.523px;height:5.6px;background:#ffbc34;color:#fff;font-size:4.1px;line-height:5.8px;text-align:center;font-weight:700;-webkit-text-stroke:0.1px #fff">22%</div><div style="width:40.935px;height:5.6px;background:#55ce63;color:#fff;font-size:4.1px;line-height:5.8px;text-align:center;font-weight:700;-webkit-text-stroke:0.1px #fff">24%</div><div style="width:35.818px;height:5.6px;background:#f62d51;color:#fff;font-size:4.1px;line-height:5.8px;text-align:center;font-weight:700;-webkit-text-stroke:0.1px #fff">21%</div><div style="width:17.056px;height:5.6px;background:#009efb;color:#fff;font-size:4.1px;line-height:5.8px;text-align:center;font-weight:700;-webkit-text-stroke:0.1px #fff">10%</div></div>
<svg style="position:absolute;left:306.70px;top:296.30px;" width="6.40" height="6.40" viewBox="0 0 16 16"><circle cx="8" cy="8" r="6.3" fill="#fff" stroke="#7460ee" stroke-width="1.9"/><circle cx="8" cy="8" r="2.4" fill="#7460ee"/></svg>
<div style="position:absolute;left:315.30px;top:298.00px;font-size:5.85px;line-height:5.85px;color:#4a4a4a;font-weight:400;white-space:nowrap;transform:scaleY(1.12);transform-origin:50% 4px;">Completed Tasks</div>
<div style="position:absolute;right:220.10px;top:298.00px;font-size:5.85px;line-height:5.85px;color:#4a4a4a;font-weight:400;white-space:nowrap;transform:scaleY(1.12);transform-origin:50% 4px;">166</div>
<svg style="position:absolute;left:306.70px;top:310.52px;" width="6.40" height="6.40" viewBox="0 0 16 16"><circle cx="8" cy="8" r="6.3" fill="#fff" stroke="#ffbc34" stroke-width="1.9"/><circle cx="8" cy="8" r="2.4" fill="#ffbc34"/></svg>
<div style="position:absolute;left:315.30px;top:312.00px;font-size:5.85px;line-height:5.85px;color:#4a4a4a;font-weight:400;white-space:nowrap;transform:scaleY(1.12);transform-origin:50% 4px;">Inprogress Tasks</div>
<div style="position:absolute;right:220.10px;top:312.00px;font-size:5.85px;line-height:5.85px;color:#4a4a4a;font-weight:400;white-space:nowrap;transform:scaleY(1.12);transform-origin:50% 4px;">115</div>
<svg style="position:absolute;left:306.70px;top:324.74px;" width="6.40" height="6.40" viewBox="0 0 16 16"><circle cx="8" cy="8" r="6.3" fill="#fff" stroke="#55ce63" stroke-width="1.9"/><circle cx="8" cy="8" r="2.4" fill="#55ce63"/></svg>
<div style="position:absolute;left:315.30px;top:326.00px;font-size:5.85px;line-height:5.85px;color:#4a4a4a;font-weight:400;white-space:nowrap;transform:scaleY(1.12);transform-origin:50% 4px;">On Hold Tasks</div>
<div style="position:absolute;right:220.10px;top:326.00px;font-size:5.85px;line-height:5.85px;color:#4a4a4a;font-weight:400;white-space:nowrap;transform:scaleY(1.12);transform-origin:50% 4px;">31</div>
<svg style="position:absolute;left:306.70px;top:338.96px;" width="6.40" height="6.40" viewBox="0 0 16 16"><circle cx="8" cy="8" r="6.3" fill="#fff" stroke="#f62d51" stroke-width="1.9"/><circle cx="8" cy="8" r="2.4" fill="#f62d51"/></svg>
<div style="position:absolute;left:315.30px;top:340.00px;font-size:5.85px;line-height:5.85px;color:#4a4a4a;font-weight:400;white-space:nowrap;transform:scaleY(1.12);transform-origin:50% 4px;">Pending Tasks</div>
<div style="position:absolute;right:220.10px;top:340.00px;font-size:5.85px;line-height:5.85px;color:#4a4a4a;font-weight:400;white-space:nowrap;transform:scaleY(1.12);transform-origin:50% 4px;">47</div>
<svg style="position:absolute;left:306.70px;top:353.18px;" width="6.40" height="6.40" viewBox="0 0 16 16"><circle cx="8" cy="8" r="6.3" fill="#fff" stroke="#009efb" stroke-width="1.9"/><circle cx="8" cy="8" r="2.4" fill="#009efb"/></svg>
<div style="position:absolute;left:315.30px;top:355.00px;font-size:5.85px;line-height:5.85px;color:#4a4a4a;font-weight:400;white-space:nowrap;transform:scaleY(1.12);transform-origin:50% 4px;">Review Tasks</div>
<div style="position:absolute;right:220.10px;top:355.00px;font-size:5.85px;line-height:5.85px;color:#4a4a4a;font-weight:400;white-space:nowrap;transform:scaleY(1.12);transform-origin:50% 4px;">5</div>
<div style="position:absolute;left:511.00px;top:232.00px;font-size:7.90px;line-height:7.90px;color:#1f1f1f;font-weight:400;white-space:nowrap;-webkit-text-stroke:0.2px currentColor;">Today Absent</div>
<div style="position:absolute;left:563.70px;top:231.90px;width:9.20px;height:8.10px;background:rgba(242,17,54,0.12);box-shadow:inset 0 0 0 0.5px rgba(242,17,54,0.3);border-radius:1px;"></div>
<div style="position:absolute;left:418.30px;width:300px;text-align:center;top:234.00px;font-size:5.00px;line-height:5.00px;color:#e0143c;font-weight:700;white-space:nowrap;transform:scaleY(1.12);transform-origin:50% 4px;-webkit-text-stroke:0.1px currentColor;">5</div>
<div style="position:absolute;left:511.20px;top:248.00px;width:182.00px;height:44.40px;background:#fff;box-shadow:0 0 0 0.45px #e3e3e3;"></div>
<div style="position:absolute;left:517.00px;top:253.80px;width:14px;height:14px;border-radius:50%;background:#cfcfcf;overflow:hidden"><div style="position:absolute;left:4.4px;top:2.6px;width:5.2px;height:5.2px;border-radius:50%;background:#ececec"></div><div style="position:absolute;left:2.2px;top:8.6px;width:9.6px;height:8px;border-radius:50%;background:#ececec"></div></div>
<div style="position:absolute;left:534.70px;top:259.00px;font-size:5.60px;line-height:5.60px;color:#333;font-weight:400;white-space:nowrap;transform:scaleY(1.12);transform-origin:50% 4px;">Martin Lewis</div>
<div style="position:absolute;left:516.70px;top:275.00px;font-size:4.75px;line-height:4.75px;color:#1f1f1f;font-weight:400;white-space:nowrap;transform:scaleY(1.12);transform-origin:50% 3px;">4 Mar 2022</div>
<div style="position:absolute;left:516.70px;top:281.00px;font-size:5.25px;line-height:5.25px;color:#777;font-weight:400;white-space:nowrap;transform:scaleY(1.12);transform-origin:50% 4px;">Leave Date</div>
<div style="position:absolute;left:663.60px;top:276.60px;width:23.30px;height:8.4px;background:rgba(242,17,54,0.12);box-shadow:inset 0 0 0 0.4px rgba(242,17,54,0.12);color:#e63c3c;font-size:4.85px;line-height:8.4px;text-align:center;font-weight:700">Pending</div>
<div style="position:absolute;left:511.20px;top:299.20px;width:182.00px;height:44.40px;background:#fff;box-shadow:0 0 0 0.45px #e3e3e3;"></div>
<div style="position:absolute;left:517.00px;top:305.00px;width:14px;height:14px;border-radius:50%;background:#cfcfcf;overflow:hidden"><div style="position:absolute;left:4.4px;top:2.6px;width:5.2px;height:5.2px;border-radius:50%;background:#ececec"></div><div style="position:absolute;left:2.2px;top:8.6px;width:9.6px;height:8px;border-radius:50%;background:#ececec"></div></div>
<div style="position:absolute;left:534.70px;top:310.00px;font-size:5.60px;line-height:5.60px;color:#333;font-weight:400;white-space:nowrap;transform:scaleY(1.12);transform-origin:50% 4px;">Martin Lewis</div>
<div style="position:absolute;left:516.70px;top:326.00px;font-size:4.75px;line-height:4.75px;color:#1f1f1f;font-weight:400;white-space:nowrap;transform:scaleY(1.12);transform-origin:50% 3px;">4 Mar 2022</div>
<div style="position:absolute;left:516.70px;top:332.00px;font-size:5.25px;line-height:5.25px;color:#777;font-weight:400;white-space:nowrap;transform:scaleY(1.12);transform-origin:50% 4px;">Leave Date</div>
<div style="position:absolute;left:659.60px;top:327.80px;width:27.30px;height:8.4px;background:rgba(15,183,107,0.12);box-shadow:inset 0 0 0 0.4px rgba(15,183,107,0.12);color:#26af48;font-size:4.85px;line-height:8.4px;text-align:center;font-weight:700">Approved</div>
<div style="position:absolute;left:584.10px;top:350.50px;width:37.70px;height:11.40px;background:#fff;box-shadow:0 0 0 0.45px #e3e3e3;border-radius:1px;"></div>
<div style="position:absolute;left:452.95px;width:300px;text-align:center;top:354.00px;font-size:5.55px;line-height:5.55px;color:#333;font-weight:400;white-space:nowrap;transform:scaleY(1.12);transform-origin:50% 4px;">Load More</div>
<div style="position:absolute;left:96.10px;top:380.30px;width:296.45px;height:102.00px;background:#fff;border-radius:0.8px;box-shadow:0 0 0 0.4px #ededed,0 0.4px 0.6px rgba(0,0,0,0.18);"></div>
<div style="position:absolute;left:102.90px;top:387.00px;font-size:7.69px;line-height:7.69px;color:#1f1f1f;font-weight:400;white-space:nowrap;-webkit-text-stroke:0.2px currentColor;">Invoices</div>
<div style="position:absolute;left:96.10px;top:400.10px;width:296.45px;height:0.60px;background:#e6e8ea;"></div>
<div style="position:absolute;left:96.10px;top:416.30px;width:296.45px;height:0.60px;background:#e6e8ea;"></div>
<div style="position:absolute;left:96.10px;top:433.00px;width:296.45px;height:0.60px;background:#e6e8ea;"></div>
<div style="position:absolute;left:96.10px;top:449.70px;width:296.45px;height:0.60px;background:#e6e8ea;"></div>
<div style="position:absolute;left:96.10px;top:466.50px;width:296.45px;height:0.60px;background:#e6e8ea;"></div>
<div style="position:absolute;left:104.90px;top:406.00px;font-size:6.30px;line-height:6.30px;color:#555;font-weight:400;white-space:nowrap;transform:scaleY(1.12);transform-origin:50% 5px;">Invoice ID</div>
<div style="position:absolute;left:159.10px;top:406.00px;font-size:6.30px;line-height:6.30px;color:#555;font-weight:400;white-space:nowrap;transform:scaleY(1.12);transform-origin:50% 5px;">Client</div>
<div style="position:absolute;left:243.70px;top:406.00px;font-size:6.30px;line-height:6.30px;color:#555;font-weight:400;white-space:nowrap;transform:scaleY(1.12);transform-origin:50% 5px;">Due Date</div>
<div style="position:absolute;left:303.40px;top:406.00px;font-size:6.30px;line-height:6.30px;color:#555;font-weight:400;white-space:nowrap;transform:scaleY(1.12);transform-origin:50% 5px;">Total</div>
<div style="position:absolute;left:338.90px;top:406.00px;font-size:6.30px;line-height:6.30px;color:#555;font-weight:400;white-space:nowrap;transform:scaleY(1.12);transform-origin:50% 5px;">Status</div>
<div style="position:absolute;left:104.90px;top:423.00px;font-size:5.90px;line-height:5.90px;color:#333;font-weight:400;white-space:nowrap;transform:scaleY(1.12);transform-origin:50% 4px;">#INV-0001</div>
<div style="position:absolute;left:159.10px;top:423.00px;font-size:5.90px;line-height:5.90px;color:#333;font-weight:400;white-space:nowrap;transform:scaleY(1.12);transform-origin:50% 4px;">Global Technologies</div>
<div style="position:absolute;left:243.70px;top:423.00px;font-size:5.90px;line-height:5.90px;color:#333;font-weight:400;white-space:nowrap;transform:scaleY(1.12);transform-origin:50% 4px;">11 Mar 2019</div>
<div style="position:absolute;left:303.40px;top:423.00px;font-size:5.90px;line-height:5.90px;color:#333;font-weight:400;white-space:nowrap;transform:scaleY(1.12);transform-origin:50% 4px;">$380</div>
<div style="position:absolute;left:338.90px;top:421.50px;width:34.30px;height:7.80px;background:rgba(255,152,0,0.12);box-shadow:inset 0 0 0 0.4px rgba(255,152,0,0.12);border-radius:1px;"></div>
<div style="position:absolute;left:206.05px;width:300px;text-align:center;top:424.00px;font-size:4.60px;line-height:4.60px;color:#feb000;font-weight:700;white-space:nowrap;transform:scaleY(1.12);transform-origin:50% 3px;-webkit-text-stroke:0;">Partially Paid</div>
<div style="position:absolute;left:104.90px;top:440.00px;font-size:5.90px;line-height:5.90px;color:#333;font-weight:400;white-space:nowrap;transform:scaleY(1.12);transform-origin:50% 4px;">#INV-0002</div>
<div style="position:absolute;left:159.10px;top:440.00px;font-size:5.90px;line-height:5.90px;color:#333;font-weight:400;white-space:nowrap;transform:scaleY(1.12);transform-origin:50% 4px;">Delta Infotech</div>
<div style="position:absolute;left:243.70px;top:440.00px;font-size:5.90px;line-height:5.90px;color:#333;font-weight:400;white-space:nowrap;transform:scaleY(1.12);transform-origin:50% 4px;">8 Feb 2019</div>
<div style="position:absolute;left:303.40px;top:440.00px;font-size:5.90px;line-height:5.90px;color:#333;font-weight:400;white-space:nowrap;transform:scaleY(1.12);transform-origin:50% 4px;">$500</div>
<div style="position:absolute;left:338.90px;top:438.25px;width:15.10px;height:7.80px;background:rgba(15,183,107,0.12);box-shadow:inset 0 0 0 0.4px rgba(15,183,107,0.12);border-radius:1px;"></div>
<div style="position:absolute;left:196.45px;width:300px;text-align:center;top:441.00px;font-size:4.60px;line-height:4.60px;color:#26af48;font-weight:700;white-space:nowrap;transform:scaleY(1.12);transform-origin:50% 3px;-webkit-text-stroke:0;">Paid</div>
<div style="position:absolute;left:104.90px;top:457.00px;font-size:5.90px;line-height:5.90px;color:#333;font-weight:400;white-space:nowrap;transform:scaleY(1.12);transform-origin:50% 4px;">#INV-0003</div>
<div style="position:absolute;left:159.10px;top:457.00px;font-size:5.90px;line-height:5.90px;color:#333;font-weight:400;white-space:nowrap;transform:scaleY(1.12);transform-origin:50% 4px;">Cream Inc</div>
<div style="position:absolute;left:243.70px;top:457.00px;font-size:5.90px;line-height:5.90px;color:#333;font-weight:400;white-space:nowrap;transform:scaleY(1.12);transform-origin:50% 4px;">23 Jan 2019</div>
<div style="position:absolute;left:303.40px;top:457.00px;font-size:5.90px;line-height:5.90px;color:#333;font-weight:400;white-space:nowrap;transform:scaleY(1.12);transform-origin:50% 4px;">$60</div>
<div style="position:absolute;left:338.90px;top:455.00px;width:21.70px;height:7.80px;background:rgba(242,17,54,0.12);box-shadow:inset 0 0 0 0.4px rgba(242,17,54,0.12);border-radius:1px;"></div>
<div style="position:absolute;left:199.75px;width:300px;text-align:center;top:457.00px;font-size:4.60px;line-height:4.60px;color:#e63c3c;font-weight:700;white-space:nowrap;transform:scaleY(1.12);transform-origin:50% 3px;-webkit-text-stroke:0;">Unpaid</div>
<div style="position:absolute;left:94.60px;width:300px;text-align:center;top:473.00px;font-size:5.95px;line-height:5.95px;color:#333;font-weight:400;white-space:nowrap;transform:scaleY(1.12);transform-origin:50% 4px;">View all invoices</div>
<div style="position:absolute;left:402.55px;top:380.30px;width:296.45px;height:102.00px;background:#fff;border-radius:0.8px;box-shadow:0 0 0 0.4px #ededed,0 0.4px 0.6px rgba(0,0,0,0.18);"></div>
<div style="position:absolute;left:409.35px;top:387.00px;font-size:7.69px;line-height:7.69px;color:#1f1f1f;font-weight:400;white-space:nowrap;-webkit-text-stroke:0.2px currentColor;">Payments</div>
<div style="position:absolute;left:402.55px;top:400.10px;width:296.45px;height:0.60px;background:#e6e8ea;"></div>
<div style="position:absolute;left:402.55px;top:416.50px;width:296.45px;height:0.60px;background:#e6e8ea;"></div>
<div style="position:absolute;left:402.55px;top:432.40px;width:296.45px;height:0.60px;background:#e6e8ea;"></div>
<div style="position:absolute;left:402.55px;top:448.30px;width:296.45px;height:0.60px;background:#e6e8ea;"></div>
<div style="position:absolute;left:402.55px;top:464.30px;width:296.45px;height:0.60px;background:#e6e8ea;"></div>
<div style="position:absolute;left:410.95px;top:406.00px;font-size:6.30px;line-height:6.30px;color:#555;font-weight:400;white-space:nowrap;transform:scaleY(1.12);transform-origin:50% 5px;">Invoice ID</div>
<div style="position:absolute;left:459.65px;top:406.00px;font-size:6.30px;line-height:6.30px;color:#555;font-weight:400;white-space:nowrap;transform:scaleY(1.12);transform-origin:50% 5px;">Client</div>
<div style="position:absolute;left:534.85px;top:406.00px;font-size:6.30px;line-height:6.30px;color:#555;font-weight:400;white-space:nowrap;transform:scaleY(1.12);transform-origin:50% 5px;">Payment Type</div>
<div style="position:absolute;left:595.95px;top:406.00px;font-size:6.30px;line-height:6.30px;color:#555;font-weight:400;white-space:nowrap;transform:scaleY(1.12);transform-origin:50% 5px;">Paid Date</div>
<div style="position:absolute;left:649.05px;top:406.00px;font-size:6.30px;line-height:6.30px;color:#555;font-weight:400;white-space:nowrap;transform:scaleY(1.12);transform-origin:50% 5px;">Paid Amount</div>
<div style="position:absolute;left:410.95px;top:423.00px;font-size:5.90px;line-height:5.90px;color:#333;font-weight:400;white-space:nowrap;transform:scaleY(1.12);transform-origin:50% 4px;">#INV-0001</div>
<div style="position:absolute;left:459.65px;top:423.00px;font-size:5.90px;line-height:5.90px;color:#333;font-weight:400;white-space:nowrap;transform:scaleY(1.12);transform-origin:50% 4px;">Global Technologies</div>
<div style="position:absolute;left:534.85px;top:423.00px;font-size:5.90px;line-height:5.90px;color:#333;font-weight:400;white-space:nowrap;transform:scaleY(1.12);transform-origin:50% 4px;">Paypal</div>
<div style="position:absolute;left:595.95px;top:423.00px;font-size:5.90px;line-height:5.90px;color:#333;font-weight:400;white-space:nowrap;transform:scaleY(1.12);transform-origin:50% 4px;">11 Mar 2019</div>
<div style="position:absolute;left:649.05px;top:423.00px;font-size:5.90px;line-height:5.90px;color:#333;font-weight:400;white-space:nowrap;transform:scaleY(1.12);transform-origin:50% 4px;">$380</div>
<div style="position:absolute;left:410.95px;top:439.00px;font-size:5.90px;line-height:5.90px;color:#333;font-weight:400;white-space:nowrap;transform:scaleY(1.12);transform-origin:50% 4px;">#INV-0002</div>
<div style="position:absolute;left:459.65px;top:439.00px;font-size:5.90px;line-height:5.90px;color:#333;font-weight:400;white-space:nowrap;transform:scaleY(1.12);transform-origin:50% 4px;">Delta Infotech</div>
<div style="position:absolute;left:534.85px;top:439.00px;font-size:5.90px;line-height:5.90px;color:#333;font-weight:400;white-space:nowrap;transform:scaleY(1.12);transform-origin:50% 4px;">Paypal</div>
<div style="position:absolute;left:595.95px;top:439.00px;font-size:5.90px;line-height:5.90px;color:#333;font-weight:400;white-space:nowrap;transform:scaleY(1.12);transform-origin:50% 4px;">8 Feb 2019</div>
<div style="position:absolute;left:649.05px;top:439.00px;font-size:5.90px;line-height:5.90px;color:#333;font-weight:400;white-space:nowrap;transform:scaleY(1.12);transform-origin:50% 4px;">$500</div>
<div style="position:absolute;left:410.95px;top:455.00px;font-size:5.90px;line-height:5.90px;color:#333;font-weight:400;white-space:nowrap;transform:scaleY(1.12);transform-origin:50% 4px;">#INV-0003</div>
<div style="position:absolute;left:459.65px;top:455.00px;font-size:5.90px;line-height:5.90px;color:#333;font-weight:400;white-space:nowrap;transform:scaleY(1.12);transform-origin:50% 4px;">Cream Inc</div>
<div style="position:absolute;left:534.85px;top:455.00px;font-size:5.90px;line-height:5.90px;color:#333;font-weight:400;white-space:nowrap;transform:scaleY(1.12);transform-origin:50% 4px;">Paypal</div>
<div style="position:absolute;left:595.95px;top:455.00px;font-size:5.90px;line-height:5.90px;color:#333;font-weight:400;white-space:nowrap;transform:scaleY(1.12);transform-origin:50% 4px;">23 Jan 2019</div>
<div style="position:absolute;left:649.05px;top:455.00px;font-size:5.90px;line-height:5.90px;color:#333;font-weight:400;white-space:nowrap;transform:scaleY(1.12);transform-origin:50% 4px;">$60</div>
<div style="position:absolute;left:401.05px;width:300px;text-align:center;top:471.00px;font-size:5.95px;line-height:5.95px;color:#333;font-weight:400;white-space:nowrap;transform:scaleY(1.12);transform-origin:50% 4px;">View all payments</div>
<div style="position:absolute;left:96.10px;top:491.20px;width:296.45px;height:28.80px;background:#fff;border-radius:0.8px;box-shadow:0 0 0 0.4px #ededed,0 0.4px 0.6px rgba(0,0,0,0.18);"></div>
<div style="position:absolute;left:402.55px;top:491.20px;width:296.45px;height:28.80px;background:#fff;border-radius:0.8px;box-shadow:0 0 0 0.4px #ededed,0 0.4px 0.6px rgba(0,0,0,0.18);"></div>
<div style="position:absolute;left:102.90px;top:498.00px;font-size:7.69px;line-height:7.69px;color:#1f1f1f;font-weight:400;white-space:nowrap;-webkit-text-stroke:0.2px currentColor;">Clients</div>
<div style="position:absolute;left:409.30px;top:498.00px;font-size:7.69px;line-height:7.69px;color:#1f1f1f;font-weight:400;white-space:nowrap;-webkit-text-stroke:0.2px currentColor;">Recent Projects</div>
</div></body></html>
